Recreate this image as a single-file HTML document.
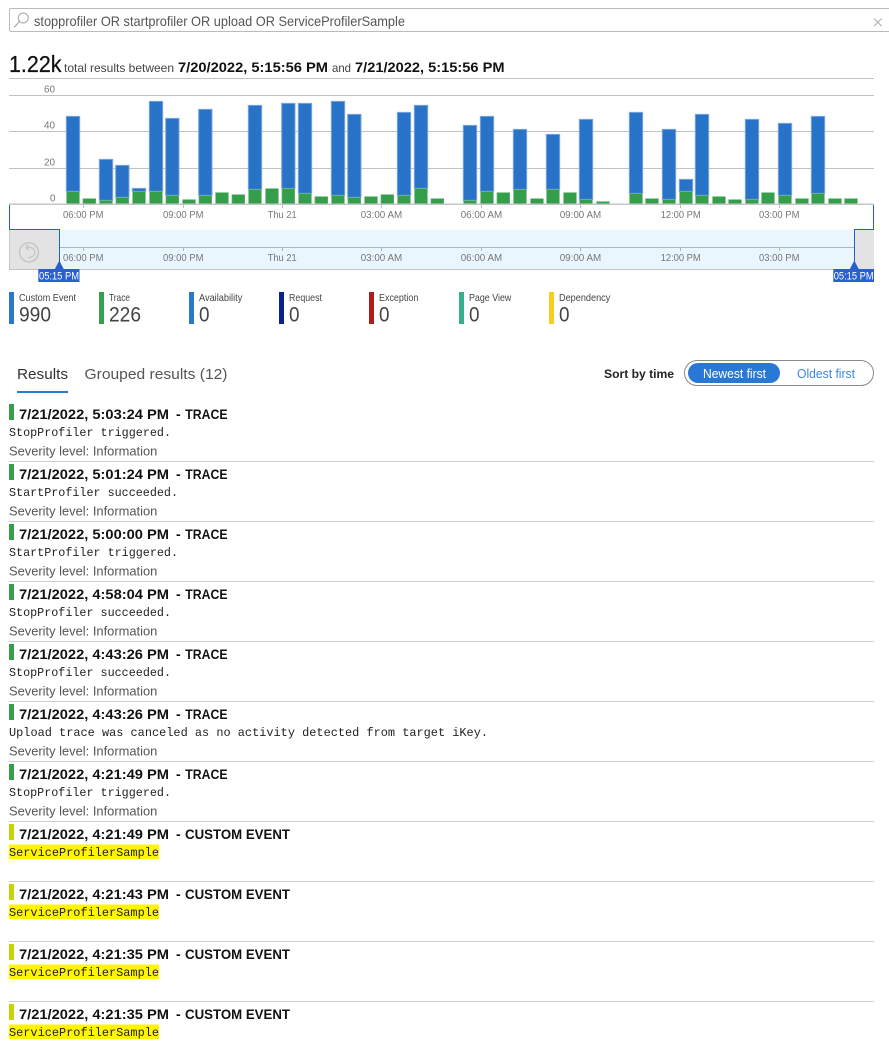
<!DOCTYPE html>
<html><head><meta charset="utf-8"><style>
html,body{margin:0;padding:0;background:#fff;width:889px;height:1055px;overflow:hidden}
svg{display:block}
text{font-family:"Liberation Sans",sans-serif;white-space:pre}
.m{font-family:"Liberation Mono",monospace;font-size:12px;fill:#222}
.t{font-size:14px;font-weight:bold;fill:#111}
.s{font-size:12.5px;fill:#555}
.a{font-size:10px;fill:#777}
.l{font-size:10.5px;fill:#444}
.v{font-size:21px;fill:#444}
.b{fill:#2873c8;stroke:#7ba7de;stroke-width:3}
.g{fill:#359e4b;stroke:#5fb26f;stroke-width:2}
</style></head><body>
<svg width="889" height="1055" viewBox="0 0 889 1055" xmlns="http://www.w3.org/2000/svg">
<!-- search -->
<path d="M889 8.5H11a1.5 1.5 0 0 0-1.5 1.5V30a1.5 1.5 0 0 0 1.5 1.5H889" fill="none" stroke="#bbb"/>
<circle cx="23.3" cy="18" r="5" fill="none" stroke="#a5a5a5"/>
<path d="M19.6 21.4L14 27.5" stroke="#a5a5a5" stroke-width="1.1"/>
<text x="34" y="26" font-size="14" fill="#555" textLength="371" lengthAdjust="spacingAndGlyphs">stopprofiler OR startprofiler OR upload OR ServiceProfilerSample</text>
<path d="M874 18.5l7.6 7.6M881.6 18.5l-7.6 7.6" stroke="#b5b5b5" stroke-width="1.2"/>
<!-- summary -->
<text x="9" y="72" font-size="23.5" fill="#111" stroke="#111" stroke-width=".25" textLength="52.5" lengthAdjust="spacingAndGlyphs">1.22k</text>
<text x="64" y="72" font-size="12" fill="#444" textLength="110" lengthAdjust="spacingAndGlyphs">total results between</text>
<text x="178" y="72" font-size="14" font-weight="bold" fill="#111" textLength="150" lengthAdjust="spacingAndGlyphs">7/20/2022, 5:15:56 PM</text>
<text x="332" y="72" font-size="12" fill="#444" textLength="19" lengthAdjust="spacingAndGlyphs">and</text>
<text x="355" y="72" font-size="14" font-weight="bold" fill="#111" textLength="149.5" lengthAdjust="spacingAndGlyphs">7/21/2022, 5:15:56 PM</text>
<!-- grid -->
<path d="M9 78.5H874M9 95.5H874M9 131.5H874M9 168.5H874" stroke="#c2c2c2"/>
<text class="a" x="44" y="92.5" textLength="11" lengthAdjust="spacingAndGlyphs">60</text>
<text class="a" x="44" y="128.5" textLength="11" lengthAdjust="spacingAndGlyphs">40</text>
<text class="a" x="44" y="165.5" textLength="11" lengthAdjust="spacingAndGlyphs">20</text>
<text class="a" x="50" y="201.5" textLength="5.5" lengthAdjust="spacingAndGlyphs">0</text>
<!-- bars (coords ×3) -->
<g transform="scale(.33333)">
<path class="b" d="M199 349V574h40V349zM298 478V601h40V478zM347 496V592h40V496zM397 565V574h40V565zM448 304V574h40V304zM497 355V586h40V355zM596 328V586h40V328zM745 316V568h40V316zM845 310V565h40V310zM895 310V580h40V310zM994 304V586h40V304zM1043 343V592h40V343zM1192 337V586h40V337zM1243 316V565h40V316zM1390 376V601h40V376zM1441 349V574h40V349zM1540 388V568h40V388zM1639 403V568h40V403zM1738 358V598h40V358zM1888 337V580h40V337zM1987 388V598h40V388zM2038 538V574h40V538zM2086 343V586h40V343zM2236 358V598h40V358zM2335 370V586h40V370zM2434 349V580h40V349z"/>
<path class="g" d="M200 575V612h38V575zM249 596V612h38V596zM299 602V612h38V602zM348 593V612h38V593zM398 575V612h38V575zM449 575V612h38V575zM498 587V612h38V587zM548 599V612h38V599zM597 587V612h38V587zM647 578V612h38V578zM696 584V612h38V584zM746 569V612h38V569zM797 566V612h38V566zM846 566V612h38V566zM896 581V612h38V581zM945 590V612h38V590zM995 587V612h38V587zM1044 593V612h38V593zM1094 590V612h38V590zM1143 584V612h38V584zM1193 587V612h38V587zM1244 566V612h38V566zM1293 596V612h38V596zM1391 602V612h38V602zM1442 575V612h38V575zM1491 578V612h38V578zM1541 569V612h38V569zM1592 596V612h38V596zM1640 569V612h38V569zM1691 578V612h38V578zM1739 599V612h38V599zM1790 605V612h38V605zM1889 581V612h38V581zM1937 596V612h38V596zM1988 599V612h38V599zM2039 575V612h38V575zM2087 587V612h38V587zM2138 590V612h38V590zM2186 599V612h38V599zM2237 599V612h38V599zM2285 578V612h38V578zM2336 587V612h38V587zM2387 596V612h38V596zM2435 581V612h38V581zM2486 596V612h38V596zM2534 596V612h38V596z"/>
</g>
<rect x="9" y="203.5" width="865" height="1.5" fill="#c6c6c6"/>
<path d="M83.5 205v3M183.5 205v3M282.5 205v3M381.5 205v3M481.5 205v3M580.5 205v3M680.5 205v3M779.5 205v3" stroke="#bbb"/>
<text class="a" x="63" y="218" textLength="40.5" lengthAdjust="spacingAndGlyphs">06:00 PM</text>
<text class="a" x="163" y="218" textLength="40.5" lengthAdjust="spacingAndGlyphs">09:00 PM</text>
<text class="a" x="267.7" y="218" textLength="29" lengthAdjust="spacingAndGlyphs">Thu 21</text>
<text class="a" x="360.7" y="218" textLength="41.5" lengthAdjust="spacingAndGlyphs">03:00 AM</text>
<text class="a" x="460.7" y="218" textLength="41.5" lengthAdjust="spacingAndGlyphs">06:00 AM</text>
<text class="a" x="559.7" y="218" textLength="41.5" lengthAdjust="spacingAndGlyphs">09:00 AM</text>
<text class="a" x="660.7" y="218" textLength="40" lengthAdjust="spacingAndGlyphs">12:00 PM</text>
<text class="a" x="759" y="218" textLength="40.5" lengthAdjust="spacingAndGlyphs">03:00 PM</text>
<!-- brush -->
<rect x="60" y="230" width="794" height="39" fill="#e9f6fd"/>
<rect x="9.5" y="230" width="50" height="39" fill="#e3e3e3"/>
<rect x="855" y="230" width="19" height="39" fill="#e3e3e3"/>
<path d="M60 247.5H854" stroke="#a9b6bd"/>
<path d="M83.5 247v4M183.5 247v4M282.5 247v4M381.5 247v4M481.5 247v4M580.5 247v4M680.5 247v4M779.5 247v4" stroke="#a9b6bd"/>
<path d="M9 269.5H874" stroke="#c4c4c4"/>
<path d="M9.5 205V229.5H59.5V262M854.5 262V229.5H873.5V205" fill="none" stroke="#2a5ecb"/>
<path d="M9.5 230V269" stroke="#c8c8c8"/>
<circle cx="29" cy="252.3" r="9.5" fill="none" stroke="#c4c4c4" stroke-width="1.4"/>
<path d="M26 247.5h4a4.8 4.8 0 0 1 2 9.2l-3.7 1.2M26 247.5l2.4-2.5M26 247.5l2.5 2.6" fill="none" stroke="#c4c4c4" stroke-width="1.3"/>
<text class="a" x="63" y="261" textLength="40.5" lengthAdjust="spacingAndGlyphs">06:00 PM</text>
<text class="a" x="163" y="261" textLength="40.5" lengthAdjust="spacingAndGlyphs">09:00 PM</text>
<text class="a" x="267.7" y="261" textLength="29" lengthAdjust="spacingAndGlyphs">Thu 21</text>
<text class="a" x="360.7" y="261" textLength="41.5" lengthAdjust="spacingAndGlyphs">03:00 AM</text>
<text class="a" x="460.7" y="261" textLength="41.5" lengthAdjust="spacingAndGlyphs">06:00 AM</text>
<text class="a" x="559.7" y="261" textLength="41.5" lengthAdjust="spacingAndGlyphs">09:00 AM</text>
<text class="a" x="660.7" y="261" textLength="40" lengthAdjust="spacingAndGlyphs">12:00 PM</text>
<text class="a" x="759" y="261" textLength="40.5" lengthAdjust="spacingAndGlyphs">03:00 PM</text>
<path d="M59.3 260.5l4.4 8.5h-8.8zM854.3 260.5l4.4 8.5h-8.8z" fill="#2a5ecb"/>
<rect x="38.3" y="269" width="41.2" height="13" fill="#2a5fd0"/>
<rect x="833.3" y="269" width="40.7" height="13" fill="#2a5fd0"/>
<text x="39" y="279.5" font-size="11" fill="#fff" textLength="40" lengthAdjust="spacingAndGlyphs">05:15 PM</text>
<text x="833.7" y="279.5" font-size="11" fill="#fff" textLength="40" lengthAdjust="spacingAndGlyphs">05:15 PM</text>
<!-- legend -->
<rect x="9" y="292" width="5" height="32" fill="#2a78c8"/>
<rect x="99" y="292" width="5" height="32" fill="#35a04f"/>
<rect x="189" y="292" width="5" height="32" fill="#2a78c8"/>
<rect x="279" y="292" width="5" height="32" fill="#0a2290"/>
<rect x="369" y="292" width="5" height="32" fill="#b01c1c"/>
<rect x="459" y="292" width="5" height="32" fill="#3aaf8e"/>
<rect x="549" y="292" width="5" height="32" fill="#f6cf1c"/>
<text class="l" x="19" y="301" textLength="57" lengthAdjust="spacingAndGlyphs">Custom Event</text>
<text class="l" x="109" y="301" textLength="21" lengthAdjust="spacingAndGlyphs">Trace</text>
<text class="l" x="199" y="301" textLength="43.3" lengthAdjust="spacingAndGlyphs">Availability</text>
<text class="l" x="289" y="301" textLength="33" lengthAdjust="spacingAndGlyphs">Request</text>
<text class="l" x="379" y="301" textLength="39.3" lengthAdjust="spacingAndGlyphs">Exception</text>
<text class="l" x="469" y="301" textLength="42.3" lengthAdjust="spacingAndGlyphs">Page View</text>
<text class="l" x="559" y="301" textLength="51.3" lengthAdjust="spacingAndGlyphs">Dependency</text>
<text class="v" x="19" y="321.7" textLength="32" lengthAdjust="spacingAndGlyphs">990</text>
<text class="v" x="109" y="321.7" textLength="32" lengthAdjust="spacingAndGlyphs">226</text>
<text class="v" x="199" y="321.7" textLength="10.5" lengthAdjust="spacingAndGlyphs">0</text>
<text class="v" x="289" y="321.7" textLength="10.5" lengthAdjust="spacingAndGlyphs">0</text>
<text class="v" x="379" y="321.7" textLength="10.5" lengthAdjust="spacingAndGlyphs">0</text>
<text class="v" x="469" y="321.7" textLength="10.5" lengthAdjust="spacingAndGlyphs">0</text>
<text class="v" x="559" y="321.7" textLength="10.5" lengthAdjust="spacingAndGlyphs">0</text>
<!-- tabs -->
<text x="17" y="379" font-size="15" fill="#333" textLength="51" lengthAdjust="spacingAndGlyphs">Results</text>
<text x="84.5" y="379" font-size="15" fill="#555" textLength="143" lengthAdjust="spacingAndGlyphs">Grouped results (12)</text>
<rect x="17" y="391" width="51" height="2" fill="#2a78d0"/>
<text x="604" y="378" font-size="12" font-weight="bold" fill="#222" textLength="70" lengthAdjust="spacingAndGlyphs">Sort by time</text>
<rect x="684.5" y="360.5" width="189" height="25" rx="12.5" fill="#fff" stroke="#8a8a8a"/>
<rect x="688" y="363" width="92" height="20" rx="10" fill="#2a78d6"/>
<text x="703" y="378" font-size="12.5" fill="#fff" textLength="63" lengthAdjust="spacingAndGlyphs">Newest first</text>
<text x="797" y="378" font-size="12.5" fill="#3b87e0" textLength="58" lengthAdjust="spacingAndGlyphs">Oldest first</text>
<!-- dividers -->
<path d="M9 461.5H874M9 521.5H874M9 581.5H874M9 641.5H874M9 701.5H874M9 761.5H874M9 821.5H874M9 881.5H874M9 941.5H874M9 1001.5H874" stroke="#cfcfcf"/>
<!-- rows -->
<rect x="9" y="404" width="5" height="16" fill="#359e4b"/>
<text class="t" x="19" y="419" textLength="150" lengthAdjust="spacingAndGlyphs">7/21/2022, 5:03:24 PM</text><text class="t" x="176" y="419">-</text><text class="t" x="185.3" y="419" textLength="42.3" lengthAdjust="spacingAndGlyphs">TRACE</text>
<text class="m" x="9" y="436" textLength="162" lengthAdjust="spacingAndGlyphs">StopProfiler triggered.</text>
<text class="s" x="9" y="455.7" textLength="148.3" lengthAdjust="spacingAndGlyphs">Severity level: Information</text>

<rect x="9" y="464" width="5" height="16" fill="#359e4b"/>
<text class="t" x="19" y="479" textLength="150" lengthAdjust="spacingAndGlyphs">7/21/2022, 5:01:24 PM</text><text class="t" x="176" y="479">-</text><text class="t" x="185.3" y="479" textLength="42.3" lengthAdjust="spacingAndGlyphs">TRACE</text>
<text class="m" x="9" y="496" textLength="169" lengthAdjust="spacingAndGlyphs">StartProfiler succeeded.</text>
<text class="s" x="9" y="515.7" textLength="148.3" lengthAdjust="spacingAndGlyphs">Severity level: Information</text>

<rect x="9" y="524" width="5" height="16" fill="#359e4b"/>
<text class="t" x="19" y="539" textLength="150" lengthAdjust="spacingAndGlyphs">7/21/2022, 5:00:00 PM</text><text class="t" x="176" y="539">-</text><text class="t" x="185.3" y="539" textLength="42.3" lengthAdjust="spacingAndGlyphs">TRACE</text>
<text class="m" x="9" y="556" textLength="169" lengthAdjust="spacingAndGlyphs">StartProfiler triggered.</text>
<text class="s" x="9" y="575.7" textLength="148.3" lengthAdjust="spacingAndGlyphs">Severity level: Information</text>

<rect x="9" y="584" width="5" height="16" fill="#359e4b"/>
<text class="t" x="19" y="599" textLength="150" lengthAdjust="spacingAndGlyphs">7/21/2022, 4:58:04 PM</text><text class="t" x="176" y="599">-</text><text class="t" x="185.3" y="599" textLength="42.3" lengthAdjust="spacingAndGlyphs">TRACE</text>
<text class="m" x="9" y="616" textLength="162" lengthAdjust="spacingAndGlyphs">StopProfiler succeeded.</text>
<text class="s" x="9" y="635.7" textLength="148.3" lengthAdjust="spacingAndGlyphs">Severity level: Information</text>

<rect x="9" y="644" width="5" height="16" fill="#359e4b"/>
<text class="t" x="19" y="659" textLength="150" lengthAdjust="spacingAndGlyphs">7/21/2022, 4:43:26 PM</text><text class="t" x="176" y="659">-</text><text class="t" x="185.3" y="659" textLength="42.3" lengthAdjust="spacingAndGlyphs">TRACE</text>
<text class="m" x="9" y="676" textLength="162" lengthAdjust="spacingAndGlyphs">StopProfiler succeeded.</text>
<text class="s" x="9" y="695.7" textLength="148.3" lengthAdjust="spacingAndGlyphs">Severity level: Information</text>

<rect x="9" y="704" width="5" height="16" fill="#359e4b"/>
<text class="t" x="19" y="719" textLength="150" lengthAdjust="spacingAndGlyphs">7/21/2022, 4:43:26 PM</text><text class="t" x="176" y="719">-</text><text class="t" x="185.3" y="719" textLength="42.3" lengthAdjust="spacingAndGlyphs">TRACE</text>
<text class="m" x="9" y="736" textLength="479" lengthAdjust="spacingAndGlyphs">Upload trace was canceled as no activity detected from target iKey.</text>
<text class="s" x="9" y="755.7" textLength="148.3" lengthAdjust="spacingAndGlyphs">Severity level: Information</text>

<rect x="9" y="764" width="5" height="16" fill="#359e4b"/>
<text class="t" x="19" y="779" textLength="150" lengthAdjust="spacingAndGlyphs">7/21/2022, 4:21:49 PM</text><text class="t" x="176" y="779">-</text><text class="t" x="185.3" y="779" textLength="42.3" lengthAdjust="spacingAndGlyphs">TRACE</text>
<text class="m" x="9" y="796" textLength="162" lengthAdjust="spacingAndGlyphs">StopProfiler triggered.</text>
<text class="s" x="9" y="815.7" textLength="148.3" lengthAdjust="spacingAndGlyphs">Severity level: Information</text>

<rect x="9" y="824" width="5" height="16" fill="#c3d500"/>
<text class="t" x="19" y="839" textLength="150" lengthAdjust="spacingAndGlyphs">7/21/2022, 4:21:49 PM</text><text class="t" x="176" y="839">-</text><text class="t" x="185" y="839" textLength="105" lengthAdjust="spacingAndGlyphs">CUSTOM EVENT</text>
<rect x="9" y="844.5" width="150" height="14.5" fill="#fff500"/>
<text class="m" x="9" y="856" textLength="150" lengthAdjust="spacingAndGlyphs">ServiceProfilerSample</text>

<rect x="9" y="884" width="5" height="16" fill="#c3d500"/>
<text class="t" x="19" y="899" textLength="150" lengthAdjust="spacingAndGlyphs">7/21/2022, 4:21:43 PM</text><text class="t" x="176" y="899">-</text><text class="t" x="185" y="899" textLength="105" lengthAdjust="spacingAndGlyphs">CUSTOM EVENT</text>
<rect x="9" y="904.5" width="150" height="14.5" fill="#fff500"/>
<text class="m" x="9" y="916" textLength="150" lengthAdjust="spacingAndGlyphs">ServiceProfilerSample</text>

<rect x="9" y="944" width="5" height="16" fill="#c3d500"/>
<text class="t" x="19" y="959" textLength="150" lengthAdjust="spacingAndGlyphs">7/21/2022, 4:21:35 PM</text><text class="t" x="176" y="959">-</text><text class="t" x="185" y="959" textLength="105" lengthAdjust="spacingAndGlyphs">CUSTOM EVENT</text>
<rect x="9" y="964.5" width="150" height="14.5" fill="#fff500"/>
<text class="m" x="9" y="976" textLength="150" lengthAdjust="spacingAndGlyphs">ServiceProfilerSample</text>

<rect x="9" y="1004" width="5" height="16" fill="#c3d500"/>
<text class="t" x="19" y="1019" textLength="150" lengthAdjust="spacingAndGlyphs">7/21/2022, 4:21:35 PM</text><text class="t" x="176" y="1019">-</text><text class="t" x="185" y="1019" textLength="105" lengthAdjust="spacingAndGlyphs">CUSTOM EVENT</text>
<rect x="9" y="1024.5" width="150" height="14.5" fill="#fff500"/>
<text class="m" x="9" y="1036" textLength="150" lengthAdjust="spacingAndGlyphs">ServiceProfilerSample</text>
</svg>
</body></html>
